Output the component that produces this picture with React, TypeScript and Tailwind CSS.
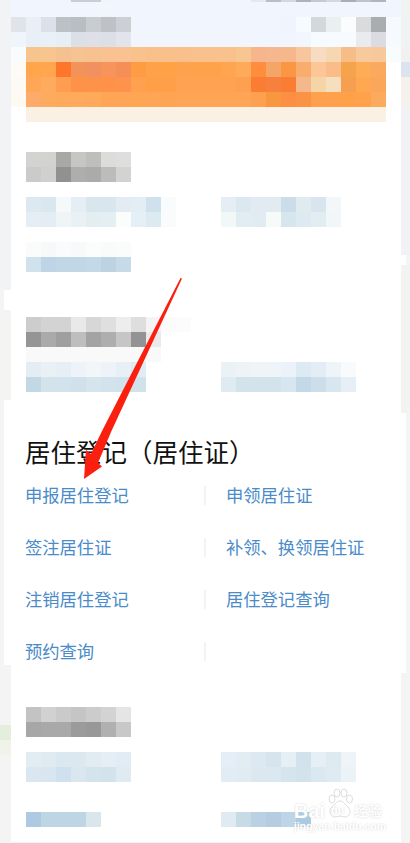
const W = "#f1f6fe";

function Row({ cells, h = 15 }: { cells: string[]; h?: number }) {
  return (
    <div className="flex">
      {cells.map((c, i) => (
        <div key={i} className="w-[15px] shrink-0" style={{ backgroundColor: c, height: h }} />
      ))}
    </div>
  );
}

const fill = (n: number, c: string) => Array.from({ length: n }, () => c);

const hero = [
  { h: 2, cells: [...fill(4, W), "#c8cdd6", "#c9ced6", "#f2f4f8", ...fill(9, W), "#e4e8f0", "#b9bec6", "#d3d7df", "#aeb3bb", "#c5cad0", "#d3d8e0", "#a9adb5", "#bfc3cb", "#b0b4bb", W] },
  { h: 15, cells: fill(26, W) },
  { h: 15, cells: ["#e0e3ea", "#eaeff7", "#dbe1e9", "#bcc1c6", "#b9bec3", "#c9cdd0", "#bfc1c6", "#cccfd3", ...fill(10, W), "#eff4fd", "#f6fbff", "#d3d9da", "#e9f1f0", "#fbfcfe", "#d9dbdd", "#a9adaf", "#f6fafe"] },
  { h: 15, cells: ["#f0f5fc", "#e8eff7", "#e8f1f8", "#e6eff6", "#dbdfe6", "#dde1e7", "#dbdfe6", "#e1e5eb", ...fill(11, W), "#f2f7fd", "#f6fbff", "#f6fbff", "#f6fbff", "#e8ecef", "#dadce1", "#f6fafe"] },
  { h: 15, cells: ["#f9fcfd", "#f8c48e", "#f8c58f", "#f5c190", "#f6c392", "#f8c290", "#f9c290", "#f9c290", "#f9c18c", "#f9c08b", "#f9c08c", "#f9c08b", "#f9c18c", "#f9c18c", "#f9c28d", "#f8c690", "#f7b58b", "#f6b78f", "#f6b78a", "#f7c69c", "#f7dcc2", "#f5d7b1", "#f6bd86", "#f6ca9c", "#f6c89a", "#f8fcfd"] },
  { h: 15, cells: ["#fefbf6", "#ffa54b", "#ffa64e", "#fe752c", "#f29359", "#f1915f", "#f6945c", "#f68f57", "#fe9c44", "#ffa247", "#ffa145", "#ffa24e", "#ffa24c", "#ffa24c", "#ffa54f", "#ffaa58", "#ff8d3d", "#f5a666", "#fb9644", "#f8ad6c", "#fcc697", "#fabd89", "#f6a44b", "#feac58", "#fba95f", "#ffffff"] },
  { h: 15, cells: ["#fdf9f4", "#ffa657", "#ffab5f", "#ff9d50", "#ff9249", "#ff9249", "#ff9246", "#ff924c", "#ffa14f", "#ff9f48", "#ff9f47", "#ffa352", "#ffa352", "#ffa352", "#ffa352", "#ff9f50", "#f97e34", "#f8803f", "#f97e34", "#f4b88c", "#f5d4a8", "#f5dfbd", "#f79f50", "#ffa851", "#fba658", "#ffffff"] },
  { h: 15, cells: ["#fefaf3", "#fdaa6a", "#ffab5d", "#ffa95b", "#ffab5b", "#ffa95a", "#ffa656", "#ffa555", "#ffa655", "#ffa556", "#ffa453", "#ffa555", "#ffa555", "#ffa555", "#ffa555", "#ffa555", "#fda04f", "#f89740", "#fd8f44", "#fa9344", "#ffa14c", "#ffa14c", "#ffa149", "#ffa24b", "#fbaa5e", "#ffffff"] },
  { h: 15, cells: ["#ffffff", ...fill(24, "#fbf0e4"), "#ffffff"] },
];

const links = [
  ["申报居住登记", "申领居住证"],
  ["签注居住证", "补领、换领居住证"],
  ["注销居住登记", "居住登记查询"],
  ["预约查询", ""],
];

function Gutter({ segs, notchSide }: { segs: [number, string, boolean?][]; notchSide: "left" | "right" }) {
  return (
    <div className="flex flex-col w-full">
      {segs.map(([h, c, notch], i) => (
        <div key={i} className="flex w-full" style={{ height: h }}>
          {notch ? (
            notchSide === "left" ? (
              <>
                <div className="w-[4px] bg-[#f3f4f4]" />
                <div className="flex-1 bg-white" />
              </>
            ) : (
              <>
                <div className="flex-1 bg-white" />
                <div className="w-[4px] bg-[#f3f4f4]" />
              </>
            )
          ) : (
            <div className="flex-1" style={{ backgroundColor: c }} />
          )}
        </div>
      ))}
    </div>
  );
}

export default function App() {
  return (
    <div className="relative flex w-[410px] h-[843px] overflow-hidden bg-[#f3f4f4] font-['Noto_Sans_CJK_SC',sans-serif]">
      <div className="w-[11px] shrink-0">
        <Gutter
          notchSide="left"
          segs={[
            [290, "#f2f3f5"],
            [20, "", true],
            [90, "#f4f4f3"],
            [265, "", true],
            [60, "#f4f4f4"],
            [15, "#e3eedd"],
            [15, "#eff3ea"],
            [183, "#f4f4f4"],
          ]}
        />
      </div>

      <div className="w-[390px] h-[842px] shrink-0 bg-white">
        <div>
          {hero.map((r, i) => (
            <Row key={i} cells={r.cells} h={r.h} />
          ))}
        </div>

        <div className="pl-[15px]">
          <div className="mt-[30px]">
            <Row cells={["#d3d3d2", "#d2d2d1", "#a8a8a7", "#c6c6c5", "#bebebd", "#dcdcdb", "#dedede"]} />
            <Row cells={["#cbcbca", "#d0d0cf", "#919190", "#aeaead", "#ababaa", "#bcbcbb", "#d3d3d2"]} />
          </div>

          <div className="mt-[15px] flex">
            <div className="w-[195px]">
              <Row cells={["#dde9f0", "#d9e8ee", "#f6f9fa", "#e6eef5", "#d8e6ee", "#d9e6ee", "#e3ecf3", "#e3eef4", "#cfe1ec", "#f8fcfd"]} />
              <Row cells={["#e5eef4", "#e4edf4", "#eff5f7", "#e9f1f4", "#e3eef1", "#e3eff3", "#fbfdfc", "#e4f0f5", "#dceaf1", "#fafcfb"]} />
            </div>
            <div>
              <Row cells={["#e6eef5", "#dbe8f0", "#e2ebf2", "#e1ebf0", "#cbdde8", "#e0ebf0", "#d8e5ef", "#f3f7fa"]} />
              <Row cells={["#f2f7f8", "#e1edf3", "#e1ecf2", "#f6faf8", "#d7e6ee", "#deeaf1", "#e1edf1", "#f1f6f9"]} />
            </div>
          </div>

          <div className="mt-[15px]">
            <Row cells={["#fbfbfb", "#f6f8fa", "#f9fbfc", "#f8faf9", "#fbfdfd", "#f9fbfa", "#fafcfb"]} />
            <Row cells={["#d0e2eb", "#bfd5e7", "#c1d7e6", "#c1d7e6", "#c4d9e7", "#bed3e2", "#c6dbe7"]} />
          </div>

          <div className="mt-[45px]">
            <Row cells={["#cdcdcd", "#d3d3d3", "#d3d3d3", "#e9e9e9", "#d7d7d7", "#dfdfdf", "#ededed", "#dedede", "#f4f4f4", "#fbfbfb", "#fcfcfc"]} />
            <Row cells={["#959595", "#aaaaaa", "#9f9f9f", "#bebebe", "#a3a3a3", "#aeaeae", "#c6c6c6", "#939396", "#eaeaea"]} />
            <Row cells={fill(9, "#f9f9f9")} />
          </div>

          <div className="flex">
            <div className="w-[195px]">
              <Row cells={["#e4edf4", "#e9f1f5", "#e6eff6", "#edf3f8", "#f2f6f9", "#edf3f8", "#e7f0f6", "#e0ecf3"]} />
              <Row cells={["#c2d8e5", "#d3e3ec", "#d2e3ec", "#d0e1eb", "#d5e4ed", "#d2e3ee", "#d2e2ec", "#d1e2ea"]} />
            </div>
            <div>
              <Row cells={["#eaf2f6", "#edf3f7", "#eef4f8", "#eff4f8", "#ebf2f9", "#deeaf3", "#e4edf5", "#eff4f8", "#f8fafb"]} />
              <Row cells={["#dfebf1", "#d2e3ec", "#d2e3ec", "#d2e3ec", "#d8e6ef", "#c4d9e7", "#cbdee9", "#d8e6ef", "#e7eff6"]} />
            </div>
          </div>
        </div>

        <section className="mt-[44px] pl-[14px]">
          <h2 className="h-[34px] text-[25.5px] leading-[30px] font-normal text-[#111111] whitespace-nowrap">
            居住登记（居住证）
          </h2>
          {links.map(([a, b], i) => (
            <div key={i} className="flex items-center h-[52px] text-[17.3px] leading-[24px] pb-[2px] text-[#4a8bc9]">
              <div className="w-[179px] whitespace-nowrap">{a}</div>
              <div className="w-[2px] h-[19px] bg-[#f2f4f4]" />
              <div className="pl-[20px] whitespace-nowrap">{b}</div>
            </div>
          ))}
        </section>

        <div className="pl-[15px]">
          <div className="mt-[29px]">
            <Row cells={["#c3c3c3", "#d1d1d1", "#cacaca", "#c5c5c5", "#cccccc", "#d3d3d3", "#e5e5e5"]} />
            <Row cells={["#a7a7a7", "#a9a9a9", "#a9a9a9", "#9b9b9b", "#989898", "#b0b0b0", "#c8c8c8"]} />
          </div>
          <div className="mt-[15px] flex">
            <div className="w-[195px]">
              <Row cells={["#e1edf3", "#dfebf1", "#dbe8f0", "#dce8f0", "#e0ebf2", "#e4eef4", "#e2ecf4"]} />
              <Row cells={["#dae7f0", "#dae6ef", "#cfe1ee", "#dae7ef", "#d3e4ec", "#d3e3ec", "#dfeaf1"]} />
            </div>
            <div>
              <Row cells={["#e5eef6", "#e2edf3", "#dce9f2", "#d5e4ed", "#e6eff3", "#d1e2ec", "#e6eff5", "#deeaf2", "#eef4f8"]} />
              <Row cells={["#e2ecf4", "#e0ebf2", "#dbe8f0", "#dbe8f1", "#d5e4ed", "#d2e3ec", "#dae8f0", "#dfebf2", "#ebf3f6"]} />
            </div>
          </div>
          <div className="mt-[30px] flex">
            <div className="w-[195px]">
              <Row cells={["#aecae2", "#bed5e4", "#bed5e4", "#bfd5e3", "#d9e7ed"]} />
            </div>
            <div>
              <Row cells={["#e0eaf3", "#c6dbe5", "#b9d1e2", "#b5cce1", "#bdd5e6", "#a9cbe2"]} />
            </div>
          </div>
        </div>
      </div>

      <div className="w-[9px] shrink-0">
        <Gutter
          notchSide="right"
          segs={[
            [47, "#f1f3f3"],
            [15, "#f0f1f0"],
            [15, "#dbe4ee"],
            [30, "#f5f2ed"],
            [148, "#f1f2f6"],
            [10, "", true],
            [148, "#f3f4f2"],
            [260, "", true],
            [170, "#f4f4f4"],
          ]}
        />
      </div>

      {/* red annotation arrow */}
      <svg className="absolute left-0 top-0 pointer-events-none" width="410" height="843" viewBox="0 0 410 843">
        <polygon
          points="180.5,278 182,278.5 111,432 98,463 102,466.5 84,479 86,450 91,454 102,431"
          fill="#fb1f10"
        />
      </svg>

      {/* watermark */}
      <div className="absolute left-[294px] top-[788px] w-[92px] h-[50px] text-white blur-[0.5px] [text-shadow:0_0_2px_#d0d0d0]">
        <span className="absolute left-0 top-[13px] text-[20px] leading-[20px] font-bold font-['Liberation_Sans',sans-serif]">Bai</span>
        <svg className="absolute left-[31px] top-[0px]" width="30" height="32" viewBox="0 0 30 32" fill="#ffffff" stroke="#dcdcdc" strokeWidth="1">
          <ellipse cx="7" cy="11" rx="3" ry="4" />
          <ellipse cx="12" cy="5" rx="3" ry="4" />
          <ellipse cx="19" cy="5" rx="3" ry="4" />
          <ellipse cx="24.5" cy="11" rx="3" ry="4" />
          <path d="M15 13c4 0 5 4 8 6 4 3 2 10-3 10-2 0-3-1-5-1s-3 1-5 1c-5 0-7-7-3-10 3-2 4-6 8-6z" />
        </svg>
        <span className="absolute left-[37px] top-[17px] text-[11px] leading-[11px] font-bold text-white font-['Liberation_Sans',sans-serif]">du</span>
        <span className="absolute left-[60px] top-[14px] text-[14px] leading-[16px] whitespace-nowrap font-bold">经验</span>
        <span className="absolute left-0 top-[32px] text-[10.5px] leading-[12px] whitespace-nowrap font-bold font-['Liberation_Sans',sans-serif]">jingyan.baidu.com</span>
      </div>
    </div>
  );
}
